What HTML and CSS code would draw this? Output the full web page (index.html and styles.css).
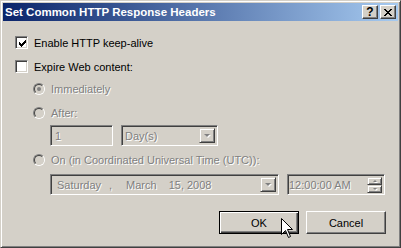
FILE: index.html
```html
<!DOCTYPE html>
<html lang="en">
<head>
    <meta charset="UTF-8">
    <title>Set Common HTTP Response Headers</title>
    <link rel="stylesheet" href="styles.css">
</head>
<body>
    <div class="window">
        <div class="titlebar">
            <span class="title">Set Common HTTP Response Headers</span>
            <div class="caption-buttons">
                <span class="cap-btn help">?</span>
                <span class="cap-btn close">
                    <svg width="8" height="7" viewBox="0 0 8 7" shape-rendering="crispEdges">
                        <path d="M0 0h2v1h-2zM6 0h2v1h-2zM1 1h2v1h-2zM5 1h2v1h-2zM2 2h4v1h-4zM3 3h2v1h-2zM2 4h4v1h-4zM1 5h2v1h-2zM5 5h2v1h-2zM0 6h2v1h-2zM6 6h2v1h-2z" fill="#000"/>
                    </svg>
                </span>
            </div>
        </div>

        <div class="content">
            <div class="row">
                <span class="check">
                    <svg width="9" height="9" viewBox="0 0 9 9" shape-rendering="crispEdges">
                        <path d="M1 3h1v3h-1zM2 4h1v3h-1zM3 5h1v3h-1zM4 4h1v3h-1zM5 3h1v3h-1zM6 2h1v3h-1zM7 1h1v3h-1z" fill="#000"/>
                    </svg>
                </span>
                <span class="label">Enable HTTP keep-alive</span>
            </div>

            <div class="row expire">
                <span class="check"></span>
                <span class="label">Expire Web content:</span>
            </div>

            <div class="options">
                <div class="row radio-row first">
                    <span class="radio"><span class="ring"><span class="dot"></span></span></span>
                    <span class="label disabled">Immediately</span>
                </div>

                <div class="row radio-row">
                    <span class="radio"><span class="ring"></span></span>
                    <span class="label disabled">After:</span>
                </div>

                <div class="field-row after-fields">
                    <div class="field number">1</div>
                    <div class="field combo">
                        <span>Day(s)</span>
                        <span class="drop-btn"><span class="arrow"></span></span>
                    </div>
                </div>

                <div class="row radio-row on">
                    <span class="radio"><span class="ring"></span></span>
                    <span class="label disabled">On (in Coordinated Universal Time (UTC)):</span>
                </div>

                <div class="field-row date-fields">
                    <div class="field date">
                        <span class="day">Saturday</span>
                        <span class="comma">,</span>
                        <span class="month">March</span>
                        <span class="year">15, 2008</span>
                        <span class="drop-btn"><span class="arrow"></span></span>
                    </div>
                    <div class="field time">
                        <span>12:00:00 AM</span>
                        <span class="spin">
                            <span class="spin-btn"><span class="arrow up"></span></span>
                            <span class="spin-btn"><span class="arrow"></span></span>
                        </span>
                    </div>
                </div>
            </div>

            <div class="buttons">
                <button class="btn default">OK</button>
                <button class="btn">Cancel</button>
            </div>
        </div>

        <svg class="cursor" width="13" height="21" viewBox="0 0 13 21">
            <path d="M0.5 0.5 V16.5 L4.5 12.5 L7.5 19.5 L9.5 18.5 L6.5 11.5 L11.5 11.5 Z" fill="#fff" stroke="#000" stroke-width="1"/>
        </svg>
    </div>
</body>
</html>
```

FILE: styles.css
```css
body {
    margin: 0;
    background: #d4d0c8;
}
.window {
    position: relative;
    width: 401px;
    height: 248px;
    box-sizing: border-box;
    background: #d4d0c8;
    border: 1px solid;
    border-color: #d4d0c8 #404040 #404040 #d4d0c8;
    box-shadow: inset 1px 1px #fff, inset -1px -1px #808080;
    padding: 2px;
    font-family: "Liberation Sans", Arial, sans-serif;
    font-size: 11px;
    color: #000;
}
.titlebar {
    height: 18px;
    display: flex;
    align-items: center;
    justify-content: space-between;
    padding: 0 2px;
    background: linear-gradient(to right, #0a246a, #a6caf0);
}
.title {
    color: #fff;
    font-weight: bold;
    font-size: 11.5px;
}
.caption-buttons {
    display: flex;
    gap: 2px;
}
.cap-btn {
    width: 16px;
    height: 14px;
    box-sizing: border-box;
    display: flex;
    align-items: center;
    justify-content: center;
    background: #d4d0c8;
    border: 1px solid;
    border-color: #fff #404040 #404040 #fff;
    box-shadow: inset -1px -1px #808080;
}
.cap-btn.help {
    font-weight: bold;
    font-size: 12px;
    line-height: 1;
}
.content {
    padding: 15px 12px 0 12px;
}
.row {
    display: flex;
    align-items: center;
    height: 13px;
    gap: 6px;
}
.expire {
    margin-top: 11px;
}
.check {
    width: 13px;
    height: 13px;
    box-sizing: border-box;
    background: #fff;
    border: 1px solid;
    border-color: #808080 #fff #fff #808080;
    box-shadow: inset 1px 1px #404040, inset -1px -1px #d4d0c8;
    display: flex;
    align-items: center;
    justify-content: center;
}
.check svg {
    margin: 1px 0 0 1px;
}
.label.disabled {
    color: #808080;
    text-shadow: 1px 1px 0 #fff;
}
.options {
    margin-left: 18px;
}
.radio-row {
    margin-top: 11px;
}
.radio-row.first {
    margin-top: 9px;
}
.radio-row.on {
    margin-top: 7px;
}
.radio {
    width: 12px;
    height: 12px;
    box-sizing: border-box;
    border-radius: 50%;
    border: 1px solid;
    border-color: #808080 #fff #fff #808080;
}
.ring {
    display: flex;
    align-items: center;
    justify-content: center;
    width: 100%;
    height: 100%;
    box-sizing: border-box;
    border-radius: 50%;
    border: 1px solid;
    border-color: #404040 #d4d0c8 #d4d0c8 #404040;
    background: #d4d0c8;
}
.dot {
    width: 4px;
    height: 4px;
    border-radius: 50%;
    background: #808080;
}
.field-row {
    display: flex;
    gap: 8px;
    margin-left: 17px;
}
.after-fields {
    margin-top: 6px;
}
.date-fields {
    margin-top: 8px;
}
.field {
    height: 21px;
    box-sizing: border-box;
    display: flex;
    align-items: center;
    padding: 0 3px;
    background: #d4d0c8;
    border: 1px solid;
    border-color: #808080 #fff #fff #808080;
    box-shadow: inset 1px 1px #404040, inset -1px -1px #d4d0c8;
    color: #808080;
    text-shadow: 1px 1px 0 #fff;
    position: relative;
}
.field.number {
    width: 63px;
    padding-left: 4px;
}
.field.combo {
    width: 97px;
}
.field.date {
    width: 229px;
    padding-left: 6px;
}
.field.time {
    width: 98px;
    padding-left: 1px;
}
.date .comma {
    margin-left: 8px;
}
.date .month {
    margin-left: 14px;
}
.date .year {
    margin-left: 12px;
}
.drop-btn {
    position: absolute;
    right: 2px;
    top: 2px;
    width: 16px;
    height: 15px;
    box-sizing: border-box;
    background: #d4d0c8;
    border: 1px solid;
    border-color: #d4d0c8 #404040 #404040 #d4d0c8;
    box-shadow: inset 1px 1px #fff, inset -1px -1px #808080;
    display: flex;
    align-items: center;
    justify-content: center;
}
.arrow {
    width: 0;
    height: 0;
    border-left: 3px solid transparent;
    border-right: 3px solid transparent;
    border-top: 3px solid #808080;
    filter: drop-shadow(1px 1px 0 #fff);
}
.arrow.up {
    border-top: 0;
    border-bottom: 3px solid #808080;
}
.spin {
    position: absolute;
    right: 2px;
    top: 2px;
    display: flex;
    flex-direction: column;
}
.spin-btn {
    width: 15px;
    height: 8px;
    box-sizing: border-box;
    background: #d4d0c8;
    border: 1px solid;
    border-color: #d4d0c8 #404040 #404040 #d4d0c8;
    box-shadow: inset 1px 1px #fff, inset -1px -1px #808080;
    display: flex;
    align-items: center;
    justify-content: center;
}
.spin-btn .arrow {
    border-left-width: 2px;
    border-right-width: 2px;
    border-top-width: 2px;
}
.spin-btn .arrow.up {
    border-bottom-width: 2px;
}
.buttons {
    display: flex;
    justify-content: flex-end;
    gap: 7px;
    margin-top: 16px;
}
.btn {
    width: 80px;
    height: 23px;
    box-sizing: border-box;
    background: #d4d0c8;
    font-family: "Liberation Sans", Arial, sans-serif;
    font-size: 11px;
    color: #000;
    border: 1px solid;
    border-color: #fff #404040 #404040 #fff;
    box-shadow: inset -1px -1px #808080;
    padding: 0;
}
.btn.default {
    border-color: #000;
    box-shadow: inset 1px 1px #fff, inset -1px -1px #404040, inset -2px -2px #808080;
}
.cursor {
    position: absolute;
    left: 280px;
    top: 217px;
}
```
